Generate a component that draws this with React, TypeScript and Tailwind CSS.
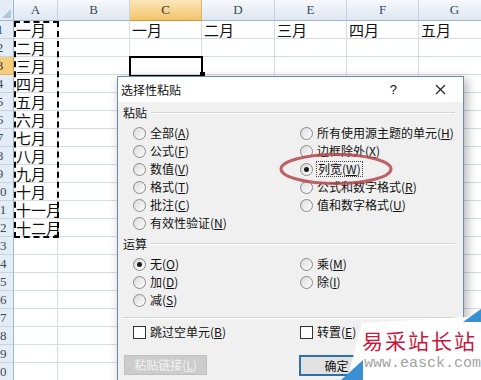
import React from "react";

const months = ["一月", "二月", "三月", "四月", "五月", "六月", "七月", "八月", "九月", "十月", "十一月", "十二月"];
const letters = ["A", "B", "C", "D", "E", "F", "G"];
const rows = Array.from({ length: 20 }, (_, i) => i + 1);

function cellText(row: number, col: string) {
  if (col === "A" && row <= 12) return months[row - 1];
  if (row === 1 && col >= "C") return months["CDEFG".indexOf(col)];
  return "";
}

function Radio({ label, k, checked, focus }: { label: string; k: string; checked?: boolean; focus?: boolean }) {
  return (
    <div className="flex h-[18px] items-center">
      <span className="flex h-[13px] w-[13px] items-center justify-center rounded-full border border-[#8a8a8a] bg-linear-to-br from-[#dadada] to-white">
        {checked && <span className="h-[5px] w-[5px] rounded-full bg-[#1c1c1c]" />}
      </span>
      <span className={focus ? "ml-[3px] border border-dotted border-[#444] px-[1px] leading-[14px]" : "ml-[4px]"}>
        {label}(<u>{k}</u>)
      </span>
    </div>
  );
}

function Section({ title }: { title: string }) {
  return (
    <div className="flex h-[16px] items-center pl-[5px] pr-[8px]">
      <span>{title}</span>
      <span className="ml-[4px] h-[2px] flex-1 border-t border-b border-t-[#d5d5d5] border-b-white" />
    </div>
  );
}

export default function App() {
  return (
    <div className="relative h-[380px] w-[481px] overflow-hidden bg-white font-['Noto_Sans_CJK_SC',sans-serif] text-[#111]">
      {/* sheet */}
      <div className="grid grid-cols-[14px_44px_72px_72px_73px_72px_72px_72px] grid-rows-[21px_repeat(20,18px)]">
        <div className="flex items-end justify-end border-r border-b border-[#9eb6ce] bg-[#e4ecf6] pr-[2px] pb-[2px]">
          <svg width="9" height="9" viewBox="0 0 9 9">
            <polygon points="9,0 9,9 0,9" fill="#b4c5da" />
          </svg>
        </div>
        {letters.map((l) => (
          <div
            key={l}
            className={
              "flex items-center justify-center border-r border-b font-['Liberation_Serif',serif] text-[13px] " +
              (l === "C"
                ? "border-r-[#e0b060] border-b-[#c99a45] bg-linear-to-b from-[#fbe6b8] to-[#f3c56a] text-[#333]"
                : "border-r-[#c6d3e3] border-b-[#9eb6ce] bg-linear-to-b from-[#f6f8fc] to-[#dfe7f2] text-[#3a4a5c]")
            }
          >
            {l}
          </div>
        ))}
        {rows.map((r) => (
          <React.Fragment key={r}>
            <div
              className={
                "overflow-hidden border-r border-b font-['Liberation_Serif',serif] text-[13px] leading-[17px] " +
                (r === 3
                  ? "border-r-[#c99a45] border-b-[#e0b060] bg-[#f6cd7c] text-[#333]"
                  : "border-r-[#9eb6ce] border-b-[#c6d3e3] bg-[#e4ecf6] text-[#3a4a5c]")
              }
            >
              <div className="-ml-[14px] w-[28px] text-center">{r}</div>
            </div>
            {letters.map((l) => (
              <div key={l} className="border-r border-b border-[#d5dce7] pl-[2px] text-[15px] leading-[17px] whitespace-nowrap">
                {cellText(r, l)}
              </div>
            ))}
          </React.Fragment>
        ))}
      </div>

      {/* copy marquee + active cell */}
      <div className="absolute top-[21px] left-[14px] h-[217px] w-[45px] border-2 border-dashed border-black" />
      <div className="absolute top-[56px] left-[129px] h-[21px] w-[74px] border-2 border-black" />
      <div className="absolute top-[72px] left-[200px] h-[5px] w-[5px] bg-black" />

      {/* paste special dialog */}
      <div className="absolute top-[76px] left-[117px] h-[320px] w-[347px] border border-[#6a8cae] bg-[#f0f0f0] text-[12px] shadow-[3px_3px_10px_rgba(0,0,0,0.3)]">
        <div className="flex h-[25px] items-center bg-white pl-[3px]">
          <span className="flex-1">选择性粘贴</span>
          <span className="mr-[38px] font-['Liberation_Sans',sans-serif] text-[13px]">?</span>
          <svg width="11" height="11" viewBox="0 0 11 11" className="mr-[17px]">
            <path d="M1 1L10 10M10 1L1 10" stroke="#222" strokeWidth="1.2" />
          </svg>
        </div>

        <div className="pt-[3px]">
          <Section title="粘贴" />
          <div className="mt-[3px] flex pl-[15px]">
            <div className="w-[167px]">
              <Radio label="全部" k="A" />
              <Radio label="公式" k="F" />
              <Radio label="数值" k="V" />
              <Radio label="格式" k="T" />
              <Radio label="批注" k="C" />
              <Radio label="有效性验证" k="N" />
            </div>
            <div>
              <Radio label="所有使用源主题的单元" k="H" />
              <Radio label="边框除外" k="X" />
              <Radio label="列宽" k="W" checked focus />
              <Radio label="公式和数字格式" k="R" />
              <Radio label="值和数字格式" k="U" />
            </div>
          </div>

          <div className="mt-[4px]">
            <Section title="运算" />
          </div>
          <div className="mt-[3px] flex pl-[15px]">
            <div className="w-[167px]">
              <Radio label="无" k="O" checked />
              <Radio label="加" k="D" />
              <Radio label="减" k="S" />
            </div>
            <div>
              <Radio label="乘" k="M" />
              <Radio label="除" k="I" />
            </div>
          </div>

          <div className="mx-[4px] mt-[8px] mr-[8px] h-[2px] border-t border-b border-t-[#d5d5d5] border-b-white" />

          <div className="mt-[4px] flex pl-[15px]">
            <div className="flex h-[18px] w-[167px] items-center">
              <span className="h-[13px] w-[13px] border border-[#333] bg-white" />
              <span className="ml-[4px]">跳过空单元(<u>B</u>)</span>
            </div>
            <div className="flex h-[18px] items-center">
              <span className="h-[13px] w-[13px] border border-[#333] bg-white" />
              <span className="ml-[4px]">转置(<u>E</u>)</span>
            </div>
          </div>

          <div className="mt-[14px] flex pl-[6px]">
            <div className="flex h-[20px] w-[83px] items-center justify-center border border-[#bfbfbf] bg-[#cccccc] text-[#f4f4f4]">
              粘贴链接(<u>L</u>)
            </div>
            <div className="ml-[92px] flex h-[21px] w-[75px] items-center justify-center border-2 border-[#2f70a8] bg-[#e1e1e1]">
              确定
            </div>
          </div>
        </div>
      </div>

      {/* red annotation */}
      <svg className="absolute top-[152px] left-[279px]" width="116" height="34" viewBox="0 0 116 34">
        <ellipse cx="57" cy="17" rx="55" ry="14.5" fill="none" stroke="#b5474c" strokeWidth="3" opacity="0.85" />
      </svg>

      {/* watermark */}
      <svg className="absolute top-[300px] left-[335px]" width="146" height="80" viewBox="0 0 146 80">
        <polygon points="27,23 130,17 146,16 146,80 12,80" fill="#ffffff" />
        <polygon points="128,22 146,9 146,22" fill="#3b8fd3" />
        <polygon points="6,80 28,60 28,80" fill="#3b8fd3" />
      </svg>
      <div className="absolute top-[326px] left-[362px] text-[21px] leading-[28px] tracking-[2px] text-[#c8163e]">易采站长站</div>
      <div className="absolute top-[355px] left-[364px] font-['Liberation_Mono',monospace] text-[15px] leading-[18px] text-[#a3a3a3]">
        www.easck.com
      </div>
    </div>
  );
}
